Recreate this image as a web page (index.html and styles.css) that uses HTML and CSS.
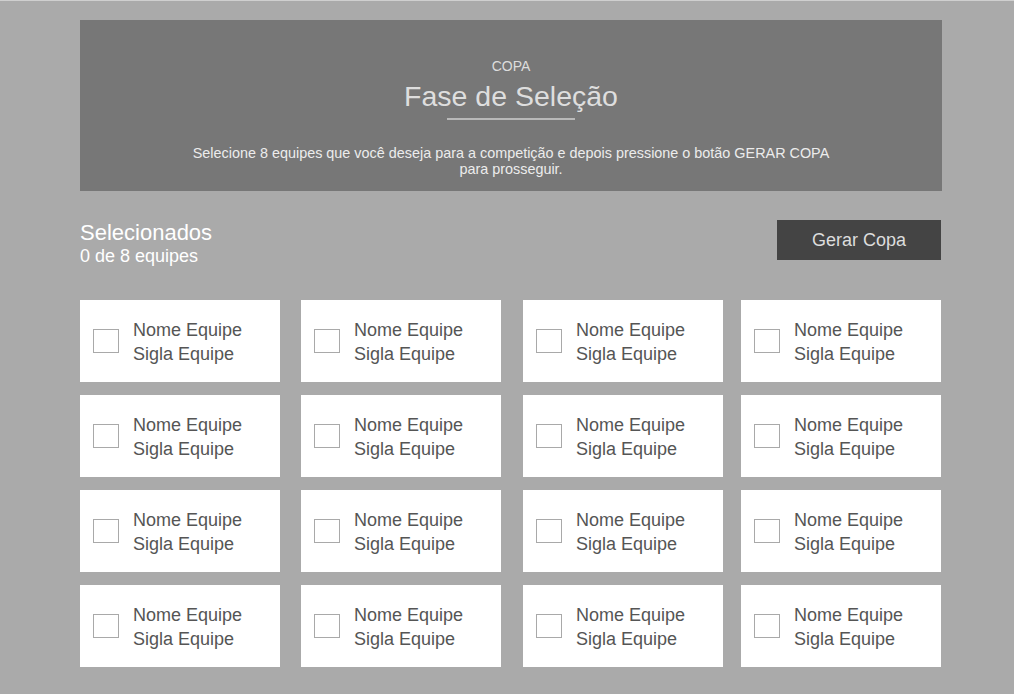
FILE: index.html
```html
<!DOCTYPE html>
<html lang="pt-BR">
<head>
<meta charset="utf-8">
<title>Fase de Seleção</title>
<link rel="stylesheet" href="styles.css">
</head>
<body>
<div class="page">
  <header class="hero">
    <div class="hero-kicker">COPA</div>
    <h1 class="hero-title">Fase de Seleção</h1>
    <div class="hero-rule"></div>
    <p class="hero-text">Selecione 8 equipes que você deseja para a competição e depois pressione o botão GERAR COPA para prosseguir.</p>
  </header>

  <section class="toolbar">
    <div class="summary">
      <div class="summary-title">Selecionados</div>
      <div class="summary-count">0 de 8 equipes</div>
    </div>
    <button class="btn-generate" type="button">Gerar Copa</button>
  </section>

  <section class="teams">
    <label class="team"><span class="check"></span><span class="team-info"><span class="team-name">Nome Equipe</span><span class="team-abbr">Sigla Equipe</span></span></label>
    <label class="team"><span class="check"></span><span class="team-info"><span class="team-name">Nome Equipe</span><span class="team-abbr">Sigla Equipe</span></span></label>
    <label class="team"><span class="check"></span><span class="team-info"><span class="team-name">Nome Equipe</span><span class="team-abbr">Sigla Equipe</span></span></label>
    <label class="team"><span class="check"></span><span class="team-info"><span class="team-name">Nome Equipe</span><span class="team-abbr">Sigla Equipe</span></span></label>
    <label class="team"><span class="check"></span><span class="team-info"><span class="team-name">Nome Equipe</span><span class="team-abbr">Sigla Equipe</span></span></label>
    <label class="team"><span class="check"></span><span class="team-info"><span class="team-name">Nome Equipe</span><span class="team-abbr">Sigla Equipe</span></span></label>
    <label class="team"><span class="check"></span><span class="team-info"><span class="team-name">Nome Equipe</span><span class="team-abbr">Sigla Equipe</span></span></label>
    <label class="team"><span class="check"></span><span class="team-info"><span class="team-name">Nome Equipe</span><span class="team-abbr">Sigla Equipe</span></span></label>
    <label class="team"><span class="check"></span><span class="team-info"><span class="team-name">Nome Equipe</span><span class="team-abbr">Sigla Equipe</span></span></label>
    <label class="team"><span class="check"></span><span class="team-info"><span class="team-name">Nome Equipe</span><span class="team-abbr">Sigla Equipe</span></span></label>
    <label class="team"><span class="check"></span><span class="team-info"><span class="team-name">Nome Equipe</span><span class="team-abbr">Sigla Equipe</span></span></label>
    <label class="team"><span class="check"></span><span class="team-info"><span class="team-name">Nome Equipe</span><span class="team-abbr">Sigla Equipe</span></span></label>
    <label class="team"><span class="check"></span><span class="team-info"><span class="team-name">Nome Equipe</span><span class="team-abbr">Sigla Equipe</span></span></label>
    <label class="team"><span class="check"></span><span class="team-info"><span class="team-name">Nome Equipe</span><span class="team-abbr">Sigla Equipe</span></span></label>
    <label class="team"><span class="check"></span><span class="team-info"><span class="team-name">Nome Equipe</span><span class="team-abbr">Sigla Equipe</span></span></label>
    <label class="team"><span class="check"></span><span class="team-info"><span class="team-name">Nome Equipe</span><span class="team-abbr">Sigla Equipe</span></span></label>
  </section>
</div>
</body>
</html>
```

FILE: styles.css
```css
* {
  box-sizing: border-box;
}

html, body {
  margin: 0;
  padding: 0;
}

body {
  background: #aaaaaa;
  border-top: 1px solid #cfcfcf;
  font-family: "Liberation Sans", Arial, sans-serif;
  min-height: 694px;
}

.page {
  width: 862px;
  margin-left: 80px;
  padding-top: 19px;
}

.hero {
  background: #777777;
  height: 171px;
  padding-top: 38px;
  text-align: center;
  display: flex;
  flex-direction: column;
  align-items: center;
}

.hero-kicker {
  font-size: 14px;
  line-height: 16px;
  color: #dddddd;
}

.hero-title {
  margin: 6px 0 0;
  font-size: 28.5px;
  line-height: 32px;
  font-weight: normal;
  color: #dedede;
}

.hero-rule {
  width: 128px;
  height: 2px;
  background: #b9b9b9;
  margin-top: 6px;
}

.hero-text {
  margin: 25px 0 0;
  max-width: 650px;
  font-size: 14.4px;
  line-height: 16px;
  color: #ececec;
}

.toolbar {
  display: flex;
  justify-content: space-between;
  align-items: flex-start;
  margin-top: 27px;
}

.summary {
  padding-top: 3px;
  color: #ffffff;
}

.summary-title {
  font-size: 22px;
  line-height: 24px;
}

.summary-count {
  margin-top: 1px;
  font-size: 18px;
  line-height: 20px;
}

.btn-generate {
  margin-top: 2px;
  margin-right: 1px;
  width: 164px;
  height: 40px;
  border: none;
  background: #444444;
  color: #dddddd;
  font-family: "Liberation Sans", Arial, sans-serif;
  font-size: 18px;
  padding: 0;
  cursor: pointer;
}

.teams {
  margin-top: 34px;
  display: grid;
  grid-template-columns: 221px 222px 218px 200px;
  row-gap: 13px;
}

.team {
  width: 200px;
  background: #ffffff;
  height: 82px;
  display: flex;
  align-items: center;
  padding-left: 13px;
  cursor: pointer;
}

.check {
  width: 26px;
  height: 24px;
  border: 1px solid #a9a9a9;
  background: #ffffff;
  flex: none;
}

.team-info {
  display: flex;
  flex-direction: column;
  margin-left: 14px;
  padding-top: 2px;
  font-size: 18px;
  line-height: 24px;
  color: #555555;
}
```
